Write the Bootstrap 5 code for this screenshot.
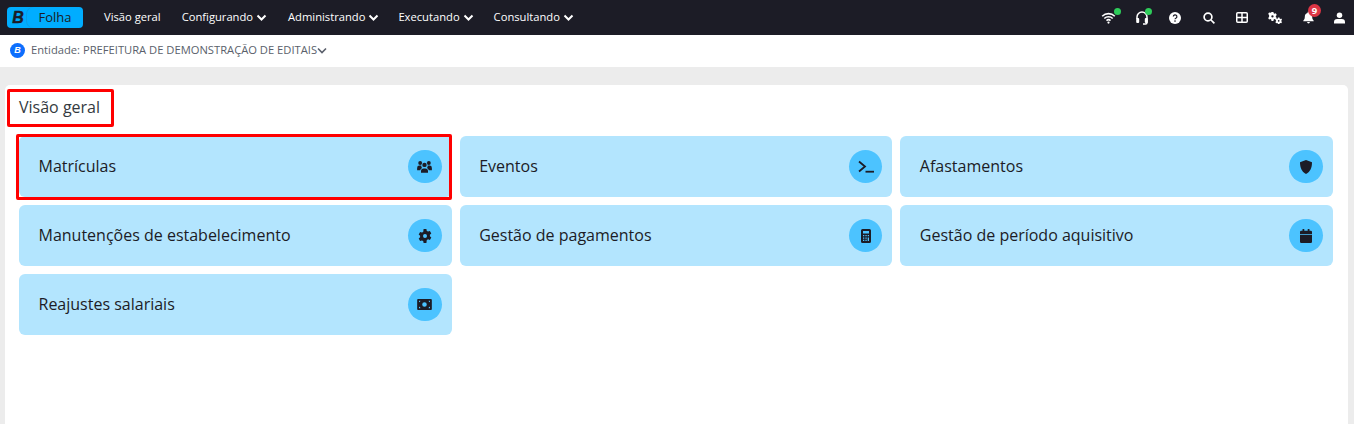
<!DOCTYPE html>
<html lang="pt-BR">
<head>
<meta charset="utf-8">
<title>Visão geral</title>
<link href="https://cdn.jsdelivr.net/npm/bootstrap@5.3.0/dist/css/bootstrap.min.css" rel="stylesheet">
<style>
html,body{height:424px;overflow:hidden}
body{background:#ececec;font-family:"Open Sans","Noto Sans",sans-serif;color:#1c1c26}
.topbar{height:35px;background:#1c1c26;padding:0 0 0 7px;flex-wrap:nowrap}
.brandbox{height:21px;width:76px;background:#00adff;border-radius:4px;color:#1c1c26;margin-right:21px;margin-bottom:1px}
.brandb{width:20px;font:italic 700 16px/21px "Liberation Sans",sans-serif;text-align:center;padding-left:2px;-webkit-text-stroke:.4px #1c1c26}
.brandname{flex:1;background:#00adff;border-radius:7px;font-size:13px;line-height:21px;text-align:center;font-weight:400;box-shadow:-1px 0 0 #0a9ee6}
.menu-link{color:#fff;font-size:11.2px;margin-right:21px;white-space:nowrap;text-decoration:none;line-height:33px;margin-bottom:2px}
.menu-link.tight-a{margin-right:19px}
.menu-link.tight-b{margin-right:20px}
.chev{width:11px;height:7px;margin-left:3px;vertical-align:0}
.tools{margin-left:auto;height:35px}
.tool{width:33.4px;height:35px;position:relative;display:flex;align-items:center;justify-content:center}
.tool:last-child{width:28.6px}
.dotgreen{position:absolute;width:7px;height:7px;border-radius:50%;background:#2ecc5a}
.bellnum{position:absolute;left:16px;top:4px;width:13px;height:13px;border-radius:50%;background:#dc3545;color:#fff;font-size:9.5px;font-weight:700;line-height:13px;text-align:center}
.entbar{height:32px;background:#fff;padding-left:10px;padding-bottom:2px;color:#5a5f6b;font-size:11.2px}
.entlogo{width:15px;height:15px;border-radius:50%;background:#0d6efd;color:#fff;font:italic 700 9px/15px "Liberation Sans",sans-serif;text-align:center;margin-right:6px}
.sheet{background:#fff;margin:18px 6px 0 5px;height:360px;border-radius:5px 5px 0 0;padding:4px 15px 0 14px;position:relative}
.pagetitle{font-size:16px;font-weight:400;line-height:36px;margin:0 0 11px;color:#343a40}
.tilegrid{display:grid;grid-template-columns:repeat(3,1fr);gap:8px}
.tile{height:61px;background:#b3e5fe;border-radius:6px;padding:0 10px 0 19.5px;font-size:16px;color:#1c1c26}
.tile>span:first-child{margin-bottom:2px}
.tilecirc{width:33.5px;height:33.5px;border-radius:50%;background:#4cc3ff;flex:none}
.tilecirc svg{width:14px;height:14px;fill:#1c1c26}
.markbox{position:absolute;border:3px solid #f00;border-radius:2px;pointer-events:none}
.mark-title{left:2px;top:4px;width:107px;height:38px}
.mark-tile{left:11px;top:49px;width:436px;height:66px}
</style>
</head>
<body>
<nav class="topbar d-flex align-items-center">
  <div class="brandbox d-flex">
    <span class="brandb">B</span>
    <span class="brandname">Folha</span>
  </div>
  <a class="menu-link" href="#">Visão geral</a>
  <a class="menu-link" href="#">Configurando<svg class="chev" viewBox="0 0 11 7"><path d="M1.500 1.500l4 4 4-4" fill="none" stroke="#fff" stroke-width="2"/></svg></a>
  <a class="menu-link tight-a" href="#">Administrando<svg class="chev" viewBox="0 0 11 7"><path d="M1.500 1.500l4 4 4-4" fill="none" stroke="#fff" stroke-width="2"/></svg></a>
  <a class="menu-link tight-b" href="#">Executando<svg class="chev" viewBox="0 0 11 7"><path d="M1.500 1.500l4 4 4-4" fill="none" stroke="#fff" stroke-width="2"/></svg></a>
  <a class="menu-link" href="#">Consultando<svg class="chev" viewBox="0 0 11 7"><path d="M1.500 1.500l4 4 4-4" fill="none" stroke="#fff" stroke-width="2"/></svg></a>
  <div class="tools d-flex">
    <div class="tool"><svg width="15" height="12" viewBox="0 0 14 12" fill="none" stroke="#fff" stroke-width="1.600"><path d="M.7 4.200a9 9 0 0 1 12.600 0M2.800 6.500a6 6 0 0 1 8.400 0M5 8.600a3 3 0 0 1 4 0"/><circle cx="7" cy="10.600" r="1.100" fill="#fff" stroke="none"/></svg><span class="dotgreen" style="left:22px;top:8px"></span></div>
    <div class="tool"><svg width="12" height="14" viewBox="0 0 12 14" fill="none" stroke="#fff" stroke-width="1.500"><path d="M1 8V6a5 5 0 0 1 10 0v5.500a1.500 1.500 0 0 1-1.500 1.500H7"/><rect x=".2" y="7" width="3" height="5" rx="1" fill="#fff" stroke="none"/><rect x="8.800" y="7" width="3" height="5" rx="1" fill="#fff" stroke="none"/></svg><span class="dotgreen" style="left:20px;top:8px"></span></div>
    <div class="tool"><svg width="12" height="12" viewBox="0 0 12 12"><circle cx="6" cy="6" r="6" fill="#fff"/><path d="M4.300 4.600a1.800 1.800 0 1 1 2.600 1.600c-.6.300-.9.600-.9 1.100" fill="none" stroke="#1c1c26" stroke-width="1.200"/><circle cx="6" cy="9.100" r=".8" fill="#1c1c26"/></svg></div>
    <div class="tool"><svg width="12" height="12" viewBox="0 0 12 12" fill="none" stroke="#fff" stroke-width="1.700"><circle cx="5" cy="5" r="3.900"/><path d="M8 8l3.400 3.400"/></svg></div>
    <div class="tool"><svg width="12" height="11" viewBox="0 0 12 11" fill="none" stroke="#fff" stroke-width="1.500"><rect x=".75" y=".75" width="10.500" height="9.500" rx="1"/><path d="M.75 5.500h10.500M6 .75v9.500"/></svg></div>
    <div class="tool"><svg width="14" height="12" viewBox="0 0 14.500 12.500" fill="#fff"><path fill-rule="evenodd" d="M3.600 0h2l.3 1.400.9.500 1.300-.5 1 1.700-1 1v1.100l1 1-1 1.700-1.300-.5-.9.500-.3 1.400h-2l-.3-1.400-.9-.5-1.300.5-1-1.700 1-1V3.100l-1-1 1-1.700 1.300.5.900-.5zM4.600 3.400a1.200 1.200 0 1 0 0 2.400 1.200 1.200 0 0 0 0-2.400z"/><path fill-rule="evenodd" d="M10.300 5.800h1.600l.2 1 .7.400 1-.3.800 1.300-.8.700v.8l.8.7-.8 1.300-1-.3-.7.400-.2 1h-1.600l-.2-1-.7-.4-1 .3-.8-1.300.8-.7v-.8l-.8-.7.800-1.300 1 .3.700-.4zM11.100 8.300a.9.900 0 1 0 0 1.800.9.900 0 0 0 0-1.800z"/></svg></div>
    <div class="tool"><svg width="11" height="13" viewBox="0 0 12 13" fill="#fff"><path d="M6 0a1 1 0 0 1 1 1v.6A4 4 0 0 1 10 5.500c0 2.800 1 3.800 1.700 4.500v.7H.3V10C1 9.300 2 8.300 2 5.500A4 4 0 0 1 5 1.600V1a1 1 0 0 1 1-1zM4.500 11.500h3a1.500 1.500 0 0 1-3 0z"/></svg><span class="bellnum">9</span></div>
    <div class="tool"><svg width="11" height="12" viewBox="0 0 12 12" fill="#fff"><circle cx="6" cy="3" r="3"/><path d="M0 12v-1.500A3.500 3.500 0 0 1 3.500 7h5A3.500 3.500 0 0 1 12 10.500V12z"/></svg></div>
  </div>
</nav>
<div class="entbar d-flex align-items-center">
  <span class="entlogo">B</span>
  <span>Entidade: PREFEITURA DE DEMONSTRAÇÃO DE EDITAIS</span>
  <svg width="10" height="7" viewBox="0 0 10 7"><path d="M1 1.500l4 4 4-4" fill="none" stroke="#5a5f6b" stroke-width="1.600"/></svg>
</div>
<main class="sheet">
  <h1 class="pagetitle">Visão geral</h1>
  <div class="tilegrid">
    <div class="tile d-flex align-items-center justify-content-between"><span>Matrículas</span><span class="tilecirc d-flex align-items-center justify-content-center"><svg viewBox="0 0 16 13" style="width:15px;height:12px"><circle cx="3.300" cy="2.200" r="2.100"/><circle cx="12.700" cy="2.200" r="2.100"/><circle cx="8" cy="4.200" r="2.400"/><path d="M0 7.500A2.500 2.500 0 0 1 2.500 5h2A3.500 3.500 0 0 0 5.300 7.600 4 4 0 0 0 3.300 10H0zM16 7.500A2.500 2.500 0 0 0 13.500 5h-2a3.500 3.500 0 0 1-.8 2.600 4 4 0 0 1 2 2.400H16zM4.200 12.800v-1.800A3 3 0 0 1 7.200 8h1.600a3 3 0 0 1 3 3v1.800z"/></svg></span></div>
    <div class="tile d-flex align-items-center justify-content-between"><span>Eventos</span><span class="tilecirc d-flex align-items-center justify-content-center"><svg viewBox="0 0 16 14" style="width:16px;height:14px"><path d="M1 1.500L7 6.500 1 11.500" fill="none" stroke="#1c1c26" stroke-width="1.800"/><rect x="7.500" y="10.800" width="8.500" height="1.800"/></svg></span></div>
    <div class="tile d-flex align-items-center justify-content-between"><span>Afastamentos</span><span class="tilecirc d-flex align-items-center justify-content-center"><svg viewBox="0 0 14 14"><path d="M7 0l6 2.300c0 5-1.500 9.500-6 11.700C2.500 11.800 1 7.300 1 2.300z"/></svg></span></div>
    <div class="tile d-flex align-items-center justify-content-between"><span>Manutenções de estabelecimento</span><span class="tilecirc d-flex align-items-center justify-content-center"><svg viewBox="0 0 14 14"><path fill-rule="evenodd" d="M5.600 0h2.800l.4 1.900 1.300.7 1.800-.6 1.400 2.400-1.400 1.300v1.500l1.400 1.300-1.400 2.400-1.800-.6-1.300.7L8.400 14H5.600l-.4-1.900-1.300-.7-1.800.6L.7 9.600l1.400-1.300V6.700L.7 5.400 2.100 3l1.800.6 1.300-.7zM7 5a2 2 0 1 0 0 4 2 2 0 0 0 0-4z"/></svg></span></div>
    <div class="tile d-flex align-items-center justify-content-between"><span>Gestão de pagamentos</span><span class="tilecirc d-flex align-items-center justify-content-center"><svg viewBox="0 0 10 14" style="width:10px;height:14px"><path fill-rule="evenodd" d="M1.500 0h7A1.500 1.500 0 0 1 10 1.500v11A1.500 1.500 0 0 1 8.500 14h-7A1.500 1.500 0 0 1 0 12.500v-11A1.500 1.500 0 0 1 1.500 0zM2 2v2.500h6V2zM2 6v1.300h1.300V6zM4.400 6v1.300h1.300V6zM6.700 6v1.300H8V6zM2 8.500v1.300h1.300V8.500zM4.400 8.500v1.300h1.300V8.500zM6.700 8.500v3.500H8V8.500zM2 10.800V12h1.300v-1.200zM4.400 10.800V12h1.300v-1.200z"/></svg></span></div>
    <div class="tile d-flex align-items-center justify-content-between"><span>Gestão de período aquisitivo</span><span class="tilecirc d-flex align-items-center justify-content-center"><svg viewBox="0 0 12 14" style="width:12px;height:14px"><rect x="2.500" y="0" width="1.800" height="3" rx=".5"/><rect x="7.700" y="0" width="1.800" height="3" rx=".5"/><path d="M1.200 1.700h9.600A1.200 1.200 0 0 1 12 2.900v2.400H0V2.900a1.200 1.200 0 0 1 1.200-1.200zM0 6h12v6.800a1.200 1.200 0 0 1-1.200 1.200H1.200A1.200 1.200 0 0 1 0 12.800z"/></svg></span></div>
    <div class="tile d-flex align-items-center justify-content-between"><span>Reajustes salariais</span><span class="tilecirc d-flex align-items-center justify-content-center"><svg viewBox="0 0 16 12" style="width:15px;height:11px"><path fill-rule="evenodd" d="M1 0h14a1 1 0 0 1 1 1v10a1 1 0 0 1-1 1H1a1 1 0 0 1-1-1V1a1 1 0 0 1 1-1zM8 3.500a2.500 2.500 0 1 0 0 5 2.500 2.500 0 0 0 0-5zM2 2v1.500a1.500 1.500 0 0 0 1.500-1.500zM12.500 2a1.500 1.500 0 0 0 1.500 1.500V2zM2 8.500V10h1.500a1.500 1.500 0 0 0-1.500-1.500zM14 8.500a1.500 1.500 0 0 0-1.500 1.500H14z"/></svg></span></div>
  </div>
  <span class="markbox mark-title"></span>
  <span class="markbox mark-tile"></span>
</main>
<script src="https://cdn.jsdelivr.net/npm/bootstrap@5.3.0/dist/js/bootstrap.bundle.min.js"></script>
</body>
</html>
